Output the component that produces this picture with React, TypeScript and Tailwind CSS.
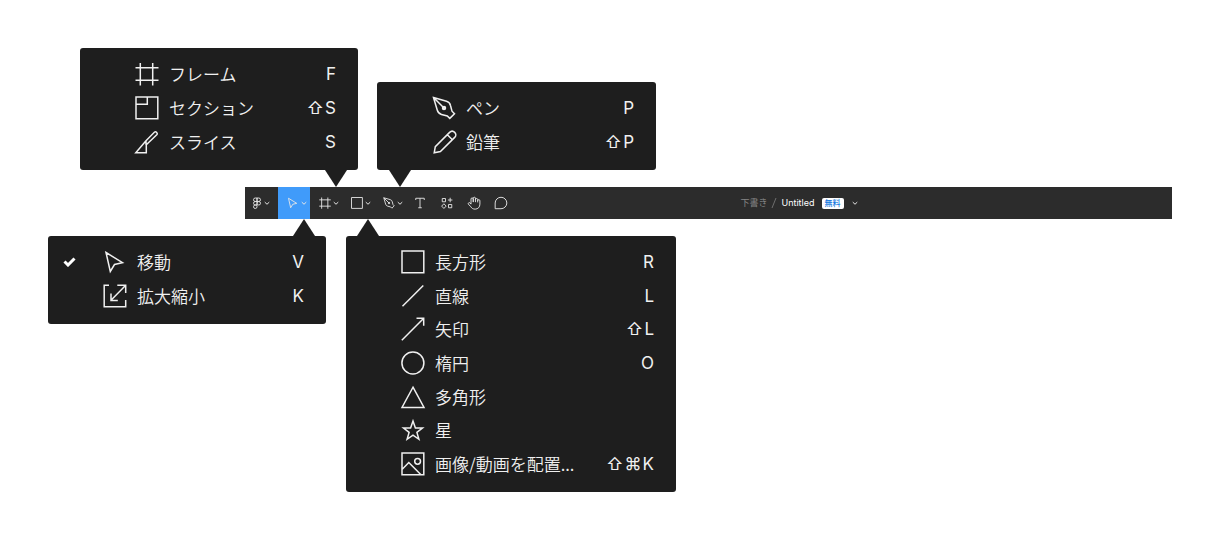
import type { ReactNode } from "react";

const shapes: Record<string, ReactNode> = {
  figma: (
    <path d="M12 2H8.5a3.5 3.5 0 0 0 0 7H12zM12 2h3.5a3.5 3.5 0 0 1 0 7H12zM12 9H8.5a3.5 3.5 0 0 0 0 7H12zM15.5 9a3.5 3.5 0 1 1 0 7 3.5 3.5 0 0 1 0-7zM12 16H8.5a3.5 3.5 0 1 0 3.5 3.5z" />
  ),
  move: <path d="M3 2.5 19.5 12.7 11.5 14.5 7.3 21.5Z" />,
  scale: (
    <path d="M6 1.3H1.2V22.7H22.7V16M14.3 1.3H22.7V9M22.5 1.5 8 16.2M8 9.5V16.5H14.8" />
  ),
  frame: <path d="M5.3 1V23.5M17.7 1V23.5M.5 5.7H23.5M.5 18.3H23.5" />,
  section: <path d="M1 1H22.8V22.8H1ZM1 8.2H12.3V1" />,
  slice: (
    <path d="M.8 22.8H11.3V14.8L22 4.6C23 3.4 21 .9 19.6 2L11 10.8ZM11 10.8V14.8" />
  ),
  rectangle: <path d="M1 1H22.8V22.8H1Z" />,
  line: <path d="M1.5 22.3 22.3 1.5" />,
  arrow: <path d="M.8 23.2 22.5 1.5M15.5 1.3H22.7V8.7" />,
  ellipse: <circle cx="11.9" cy="12" r="11" />,
  polygon: <path d="M12 2.2 23 22.5H1Z" />,
  star: (
    <path d="M12 3 14.4 10 21.5 10 15.9 14.4 17.9 21.3 12 17.2 6.1 21.3 8.1 14.4 2.5 10 9.6 10Z" />
  ),
  image: (
    <>
      <path d="M1 1H22.8V22.8H1ZM1 17.5 7.8 10.5 20 22.8" />
      <circle cx="16.6" cy="9.3" r="2.9" />
    </>
  ),
  pen: (
    <>
      <path d="M1.5 1.5 14.5 5.3C16.8 6 18 7.3 18.5 9.5L20 15.2 22.5 17.7 17.8 22.4 15.3 19.9 9.5 18.4C7.3 17.8 6 16.6 5.3 14.3ZM1.5 1.5 12 12" />
      <circle cx="12" cy="12" r="1.5" fill="currentColor" />
    </>
  ),
  pencil: (
    <path d="M2.2 22.8 3.3 16.6 17.6 2.4C19.2 .8 21.3 1 22.7 2.4S24.3 5.8 22.7 7.4L8.4 21.6ZM15.3 4.7 20.4 9.7" />
  ),
  text: <path d="M3.5 6V2.5H20.5V6M12 2.5V21.5M8.5 21.5H15.5" />,
  resources: (
    <path d="M2.5 3H9V9.5H2.5ZM18.3 1.5V10.5M13.8 6H22.8M15 15H21.5V21.5H15ZM5.8 13.5 10.3 18.2 5.8 22.9 1.3 18.2Z" />
  ),
  hand: (
    <path d="M18.3 11V6.2a1.9 1.9 0 0 0-3.8 0V4.3M14.5 10.5V4a1.9 1.9 0 0 0-3.8 0v6.2M10.7 10.5V5.2a1.9 1.9 0 0 0-3.8 0V14M18.3 8.2a1.9 1.9 0 0 1 3.8 0V14c0 5-3.2 8.5-8 8.5-4 0-5.7-1.3-7.5-4L2.3 13.9a1.8 1.8 0 0 1 2.7-2.2L6.9 13.8" />
  ),
  comment: <path d="M2 21.8V12a10 9.8 0 1 1 10 9.8Z" />,
  chevron: <path d="M3 8.5 12 17 21 8.5" />,
};

function Icon({ name, className }: { name: string; className: string }) {
  return (
    <svg
      viewBox="0 0 24 24"
      fill="none"
      stroke="currentColor"
      aria-hidden="true"
      className={`shrink-0 overflow-visible ${className}`}
    >
      {shapes[name]}
    </svg>
  );
}

type Item = { icon: string; label: string; keys?: string; checked?: boolean };

const moveItems: Item[] = [
  { icon: "move", label: "移動", keys: "V", checked: true },
  { icon: "scale", label: "拡大縮小", keys: "K" },
];

const frameItems: Item[] = [
  { icon: "frame", label: "フレーム", keys: "F" },
  { icon: "section", label: "セクション", keys: "⇧S" },
  { icon: "slice", label: "スライス", keys: "S" },
];

const shapeItems: Item[] = [
  { icon: "rectangle", label: "長方形", keys: "R" },
  { icon: "line", label: "直線", keys: "L" },
  { icon: "arrow", label: "矢印", keys: "⇧L" },
  { icon: "ellipse", label: "楕円", keys: "O" },
  { icon: "polygon", label: "多角形" },
  { icon: "star", label: "星" },
  { icon: "image", label: "画像/動画を配置...", keys: "⇧⌘K" },
];

const penItems: Item[] = [
  { icon: "pen", label: "ペン", keys: "P" },
  { icon: "pencil", label: "鉛筆", keys: "⇧P" },
];

function Menu({ items, className }: { items: Item[]; className: string }) {
  return (
    <div
      role="menu"
      className={`absolute grid auto-rows-fr rounded-[3px] bg-[#1e1e1e] pt-[9px] pb-[11px] text-[#f0f0f0] ${className}`}
    >
      {items.map((item) => (
        <button
          key={item.label}
          type="button"
          role="menuitem"
          className="flex items-center pr-[22px] text-[17px] leading-6"
        >
          <span className="flex w-[55px] shrink-0 pl-[15px]">
            {item.checked && (
              <svg viewBox="0 0 13 10" fill="none" stroke="white" strokeWidth="3" className="h-[10px] w-[13px]">
                <path d="M1.5 4.5 5 8 11.5 1.5" />
              </svg>
            )}
          </span>
          <Icon name={item.icon} className="size-6 stroke-[1.5]" />
          <span className="ml-[10px] font-[Noto_Sans_CJK_JP,sans-serif] font-[350]">{item.label}</span>
          <span className="ml-auto flex gap-px">
            {[...(item.keys ?? "")].map((key) => (
              <kbd key={key} className="font-[Inter,sans-serif]">{key}</kbd>
            ))}
          </span>
        </button>
      ))}
    </div>
  );
}

function Pointer({ up }: { up?: boolean }) {
  return (
    <svg
      viewBox="0 0 22 17"
      aria-hidden="true"
      className={`absolute left-[15px] h-[17px] w-[22px] fill-[#1e1e1e] ${up ? "top-full" : "bottom-full"}`}
    >
      <path d={up ? "M11 0 22 17H0Z" : "M0 0H22L11 17Z"} />
    </svg>
  );
}

function Tool({ icon, label, active, children }: { icon: string; label: string; active?: boolean; children: ReactNode }) {
  return (
    <div className="relative h-full">
      <button
        type="button"
        aria-label={label}
        className={`flex h-full w-8 items-center pl-2 ${active ? "bg-[#409bfa]" : ""}`}
      >
        <span className="flex w-[14px] justify-center">
          <Icon name={icon} className="size-3 stroke-[1.8]" />
        </span>
        <span className="flex w-2 justify-center">
          <Icon name="chevron" className="size-[6px] stroke-4" />
        </span>
      </button>
      {children}
    </div>
  );
}

function Toolbar() {
  return (
    <header className="ml-[245px] mr-12 flex h-8 items-center bg-[#2c2c2c] text-[#e6e6e6]">
      <button type="button" aria-label="メインメニュー" className="flex h-full w-[33px] items-center pl-[6px]">
        <Icon name="figma" className="size-3 stroke-[1.8]" />
        <Icon name="chevron" className="ml-px size-[6px] stroke-4" />
      </button>
      <Tool icon="move" label="移動ツール" active>
        <Pointer up />
        <Menu items={moveItems} className="-left-[230px] top-full mt-[17px] h-[88px] w-[278px]" />
      </Tool>
      <Tool icon="frame" label="領域ツール">
        <Pointer />
        <Menu items={frameItems} className="-left-[230px] bottom-full mb-[17px] h-[122px] w-[278px]" />
      </Tool>
      <Tool icon="rectangle" label="シェイプツール">
        <Pointer up />
        <Menu items={shapeItems} className="left-1 top-full mt-[17px] h-[256px] w-[330px]" />
      </Tool>
      <Tool icon="pen" label="描画ツール">
        <Pointer />
        <Menu items={penItems} className="bottom-full left-[3px] mb-[17px] h-[88px] w-[279px]" />
      </Tool>
      <button type="button" aria-label="テキスト" className="flex h-full w-[27px] items-center justify-center">
        <Icon name="text" className="size-3 stroke-[1.8]" />
      </button>
      <button type="button" aria-label="リソース" className="flex h-full w-[27px] items-center justify-center">
        <Icon name="resources" className="size-3 stroke-[1.8]" />
      </button>
      <button type="button" aria-label="手のひらツール" className="flex h-full w-[27px] items-center justify-center">
        <Icon name="hand" className="size-[14px] stroke-[1.6]" />
      </button>
      <button type="button" aria-label="コメント" className="flex h-full w-[27px] items-center justify-center">
        <Icon name="comment" className="size-[14px] stroke-[1.6]" />
      </button>
      <div className="flex flex-1 items-center justify-center pr-[88px] text-[9px] leading-4">
        <a href="#drafts" className="text-[#858585]">下書き</a>
        <svg viewBox="0 0 6 12" aria-hidden="true" className="mx-1 h-3 w-[6px] stroke-[#6e6e6e]">
          <path d="M1 11 5 1" />
        </svg>
        <button type="button" className="flex items-center">
          <span className="text-white">Untitled</span>
          <span className="ml-[7px] rounded-[2px] bg-white px-[3px] text-[8px] leading-[11px] font-medium text-[#1479e0]">
            無料
          </span>
          <Icon name="chevron" className="ml-2 size-[6px] stroke-4" />
        </button>
      </div>
    </header>
  );
}

export default function App() {
  return (
    <main className="min-h-screen overflow-x-hidden bg-white pt-[187px] font-[Inter,Noto_Sans_CJK_JP,sans-serif]">
      <Toolbar />
    </main>
  );
}
